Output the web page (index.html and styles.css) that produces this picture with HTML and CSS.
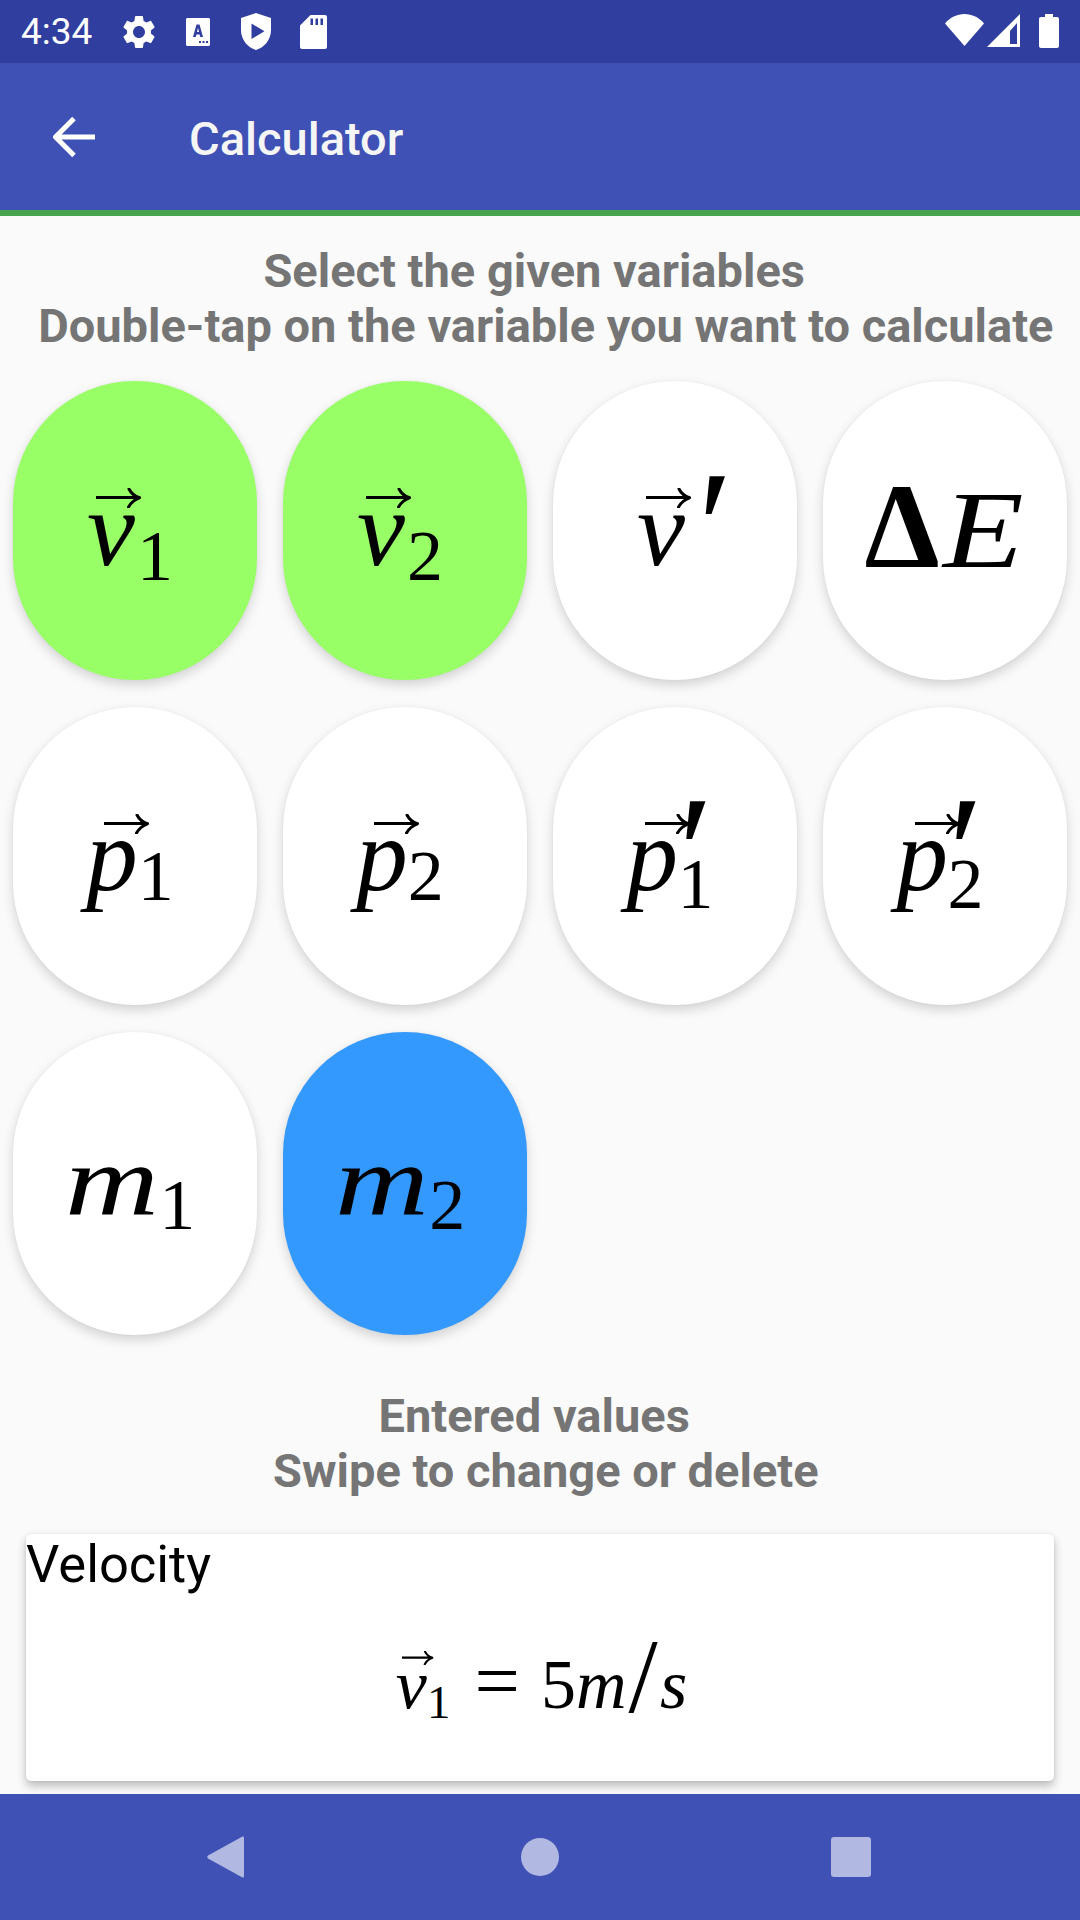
FILE: index.html
```html
<!DOCTYPE html>
<html lang="en">
<head>
<meta charset="utf-8">
<title>Calculator</title>
<link rel="stylesheet" href="styles.css">
</head>
<body>
<svg class="defs" width="0" height="0" aria-hidden="true">
  <symbol id="arrow" viewBox="0 0 45 20">
    <path d="M0 9.500H41M33 1C35 5 38 8 43.500 9.800C38.500 11.500 35 14.500 32.500 19" fill="none" stroke="#000" stroke-width="3" stroke-linecap="round" stroke-linejoin="round"/>
  </symbol>
</svg>
<div class="screen">
  <header class="status">
    <span class="time">4:34</span>
    <svg class="ic gear" viewBox="0 0 24 24"><path fill="#fff" d="M19.14 12.94c.04-.3.06-.61.06-.94s-.02-.64-.07-.94l2.03-1.58c.18-.14.23-.41.12-.61l-1.92-3.32c-.12-.22-.37-.29-.59-.22l-2.39.96c-.5-.38-1.03-.7-1.62-.94l-.36-2.54c-.04-.24-.24-.41-.48-.41h-3.84c-.24 0-.43.17-.47.41l-.36 2.54c-.59.24-1.13.57-1.62.94l-2.39-.96c-.22-.08-.47 0-.59.22L2.74 8.87c-.12.21-.08.47.12.61l2.03 1.58c-.05.3-.09.63-.09.94s.02.64.07.94l-2.03 1.58c-.18.14-.23.41-.12.61l1.92 3.32c.12.22.37.29.59.22l2.39-.96c.5.38 1.03.7 1.62.94l.36 2.54c.05.24.24.41.48.41h3.84c.24 0 .44-.17.47-.41l.36-2.54c.59-.24 1.13-.56 1.62-.94l2.39.96c.22.08.47 0 .59-.22l1.92-3.32c.12-.22.07-.47-.12-.61l-2.01-1.58zM12 15.6c-1.98 0-3.6-1.62-3.6-3.6s1.62-3.6 3.6-3.6 3.6 1.62 3.6 3.6-1.62 3.6-3.6 3.6z"/></svg>
    <svg class="ic acard" viewBox="0 0 24 28"><path fill="#fff" fill-rule="evenodd" d="M1.500 0h21c.8 0 1.500.7 1.500 1.500v25c0 .8-.7 1.500-1.500 1.500h-21C.7 28 0 27.300 0 26.500v-25C0 .7.7 0 1.500 0zM10.500 6.500L7 19h2.800l.6-2.600h3.200l.6 2.600H17L13.500 6.500zM11 14l1-4.200 1 4.200zM13 23v2h2v-2zM16.500 23v2h2v-2zM20 23v2h2v-2z"/></svg>
    <svg class="ic shield" viewBox="0 0 30 37"><path fill="#fff" fill-rule="evenodd" d="M15 0L30 5V17C30 26.500 23.500 34.500 15 37C6.500 34.500 0 26.500 0 17V5zM10.500 10.500V26L23.500 18.200z"/></svg>
    <svg class="ic sd" viewBox="0 0 27 34"><path fill="#fff" fill-rule="evenodd" d="M10.500 0H25C26.100 0 27 .9 27 2V32C27 33.100 26.100 34 25 34H2C.9 34 0 33.100 0 32V10.500zM10.500 3.500V10H13V3.500zM15.500 3.500V10H18V3.500zM20.500 3.500V10H23V3.500z"/></svg>
    <span class="spacer"></span>
    <svg class="ic wifi" viewBox="0 0 39 32"><path fill="#fff" d="M0 9.500C5 3.500 12 0 19.500 0S34 3.500 39 9.500L19.500 32z"/></svg>
    <svg class="ic signal" viewBox="0 0 33 33"><path fill="#fff" fill-rule="evenodd" d="M33 0V33H0zM30 9L23 17V30H30z"/></svg>
    <svg class="ic battery" viewBox="0 0 20 34"><path fill="#fff" d="M6 0H14V3H18C19.100 3 20 3.900 20 5V32C20 33.100 19.100 34 18 34H2C.9 34 0 33.100 0 32V5C0 3.900.9 3 2 3H6z"/></svg>
  </header>

  <div class="appbar">
    <svg class="back" viewBox="0 0 42 42"><path d="M42 21H4M21 2.500L2.500 21L21 39.500" fill="none" stroke="#fff" stroke-width="5"/></svg>
    <h1 class="title">Calculator</h1>
  </div>

  <main class="content">
    <p class="hint hint-top">Select the given variables 
 Double-tap on the variable you want to calculate</p>

    <div class="grid">
      <button class="var var-green"><span class="eq"><span class="vec"><i>v</i><svg class="arr"><use href="#arrow"/></svg></span><span class="sub">1</span></span></button>
      <button class="var var-green"><span class="eq"><span class="vec"><i>v</i><svg class="arr"><use href="#arrow"/></svg></span><span class="sub">2</span></span></button>
      <button class="var"><span class="eq"><span class="vec"><i>v</i><svg class="arr"><use href="#arrow"/></svg></span><span class="prime">′</span></span></button>
      <button class="var"><span class="eq eq-delta"><span class="delta">Δ</span><i class="cap">E</i></span></button>

      <button class="var"><span class="eq eq-p"><span class="vec vec-p"><i>p</i><svg class="arr"><use href="#arrow"/></svg></span><span class="sub sub-p">1</span></span></button>
      <button class="var"><span class="eq eq-p"><span class="vec vec-p"><i>p</i><svg class="arr"><use href="#arrow"/></svg></span><span class="sub sub-p">2</span></span></button>
      <button class="var"><span class="eq eq-p"><span class="vec vec-p"><i>p</i><svg class="arr"><use href="#arrow"/></svg></span><span class="prime prime-p">′</span><span class="sub sub-pp">1</span></span></button>
      <button class="var"><span class="eq eq-p"><span class="vec vec-p"><i>p</i><svg class="arr"><use href="#arrow"/></svg></span><span class="prime prime-p">′</span><span class="sub sub-pp">2</span></span></button>

      <button class="var var-tall"><span class="eq"><i class="m">m</i><span class="sub">1</span></span></button>
      <button class="var var-tall var-blue"><span class="eq"><i class="m">m</i><span class="sub">2</span></span></button>
    </div>

    <p class="hint hint-mid">Entered values 
 Swipe to change or delete</p>

    <section class="card">
      <div class="card-label">Velocity</div>
      <div class="card-math">
        <span class="eq eq-small"><span class="vec"><i>v</i><svg class="arr"><use href="#arrow"/></svg></span><span class="sub">1</span><span class="equals">=</span><span class="five">5</span><i class="m-small">m</i><span class="slash">/</span><i class="s">s</i></span>
      </div>
    </section>
  </main>

  <nav class="navbar">
    <svg class="nav-ic nav-back" viewBox="0 0 37 42"><path fill="#b1b8e1" d="M35 .8C36 0 37 .6 37 2V40C37 41.400 36 42 35 41.200L1 22.500C0 21.500 0 20.500 1 19.500z"/></svg>
    <span class="nav-home"></span>
    <span class="nav-recent"></span>
  </nav>
</div>
</body>
</html>
```

FILE: styles.css
```css
* { box-sizing: border-box; }
html, body { margin: 0; padding: 0; }
body { width: 1080px; height: 1920px; overflow: hidden; background: #fafafa; font-family: Roboto, "Noto Sans", sans-serif; }
.defs { display: block; width: 0; height: 0; }
.screen { width: 1080px; height: 1920px; display: flex; flex-direction: column; }

.status { height: 63px; flex: none; background: #303f9f; display: flex; align-items: center; padding: 0 21px 0 21px; }
.time { color: #fff; font-size: 37px; width: 103px; line-height: 63px; }
.ic { display: block; flex: none; }
.gear { width: 40px; height: 40px; margin-left: -5px; }
.acard { width: 24px; height: 28px; margin-left: 27px; }
.shield { width: 30px; height: 37px; margin-left: 31px; }
.sd { width: 27px; height: 34px; margin-left: 29px; }
.spacer { flex: 1; }
.wifi { width: 39px; height: 32px; margin-bottom: 3px; }
.signal { width: 33px; height: 33px; margin-left: 3px; margin-bottom: 2px; }
.battery { width: 20px; height: 34px; margin-left: 19px; margin-bottom: 2px; }

.appbar { height: 153px; flex: none; background: #3f51b5; border-bottom: 6px solid #47a34d; display: flex; align-items: center; padding-left: 53px; }
.back { width: 42px; height: 42px; display: block; flex: none; }
.title { margin: 4px 0 0 94px; color: #f5f5f5; font-size: 47px; font-weight: 500; line-height: 54px; }

.content { flex: 1; min-height: 0; padding: 27px 13px 0; overflow: hidden; }
.hint { margin: 0; color: #757575; font-size: 47px; font-weight: 700; line-height: 55px; text-align: center; white-space: pre; }
.hint-mid { margin-top: 57px; }

.grid { margin-top: 28px; display: grid; grid-template-columns: repeat(4, 244px); grid-auto-rows: 298.500px; column-gap: 26px; row-gap: 27px; }
.var { border: 0; padding: 0 10px 0 0; margin: 0; background: #fff; border-radius: 122px; box-shadow: 0 5px 12px rgba(0,0,0,.16), 0 0 2px rgba(0,0,0,.06); display: flex; align-items: center; justify-content: center; color: #000; }
.var-tall { height: 303px; padding-bottom: 6px; }
.var-green { background: #99ff66; }
.var-blue { background: #3399ff; }

.eq { display: inline-block; font-family: "Liberation Serif", serif; font-size: 100px; line-height: 100px; white-space: nowrap; color: #000; }
.eq i { font-style: italic; }
.vec { display: inline-block; position: relative; }
.vec > i { font-size: 1.08em; }
.vec-p > i { font-size: 1.03em; }
.arr { position: absolute; left: .09em; top: .09em; width: .45em; height: .2em; overflow: visible; }
.vec-p .arr { left: .18em; }
.sub { font-size: .72em; line-height: 0; vertical-align: -.21em; margin-left: .03em; }
.sub-p { vertical-align: -.14em; margin-left: 0; }
.sub-pp { vertical-align: -.25em; margin-left: -.36em; }
.prime { font-size: 1.6em; font-weight: 400; line-height: 0; vertical-align: -.106em; font-style: italic; margin-left: .02em; margin-right: -.125em; }
.prime-p { margin-left: -.06em; margin-right: 0; }
.eq-delta { margin-left: 8px; }
.delta { font-size: 1.2em; font-weight: 700; }
.cap { display: inline-block; font-size: 1.1em; margin-left: .03em; margin-right: .12em; transform: scaleX(1.2); transform-origin: left center; }
.m { display: inline-block; transform: scaleX(1.3); transform-origin: left center; margin-right: .2em; }

.card { margin: 0 13px; margin-top: 36px; height: 247px; background: #fff; border-radius: 5px; box-shadow: 0 5px 10px rgba(0,0,0,.25), 0 0 3px rgba(0,0,0,.08); display: flex; flex-direction: column; }
.card-label { font-size: 52.500px; line-height: 60px; color: #000; }
.card-math { flex: 1; display: flex; justify-content: center; align-items: flex-start; padding-top: 47px; padding-left: 3px; }
.eq-small { font-size: 70px; line-height: 80px; }
.eq-small .sub { font-size: .67em; margin-left: 0; }
.eq-small .vec > i { font-size: 1em; }
.equals { margin-left: .3em; font-size: 1.15em; }
.five { margin-left: .3em; }
.slash { font-size: 1.5em; line-height: 0; font-weight: 400; vertical-align: -.04em; margin: 0 .02em; }

.navbar { height: 126px; flex: none; background: #3f51b5; position: relative; display: flex; align-items: center; padding-left: 207px; }
.nav-ic { display: block; flex: none; }
.nav-back { width: 37px; height: 42px; }
.nav-home { width: 38px; height: 38px; border-radius: 50%; background: #b1b8e1; margin-left: 277px; }
.nav-recent { width: 40px; height: 40px; border-radius: 3px; background: #b1b8e1; margin-left: 272px; }
```
